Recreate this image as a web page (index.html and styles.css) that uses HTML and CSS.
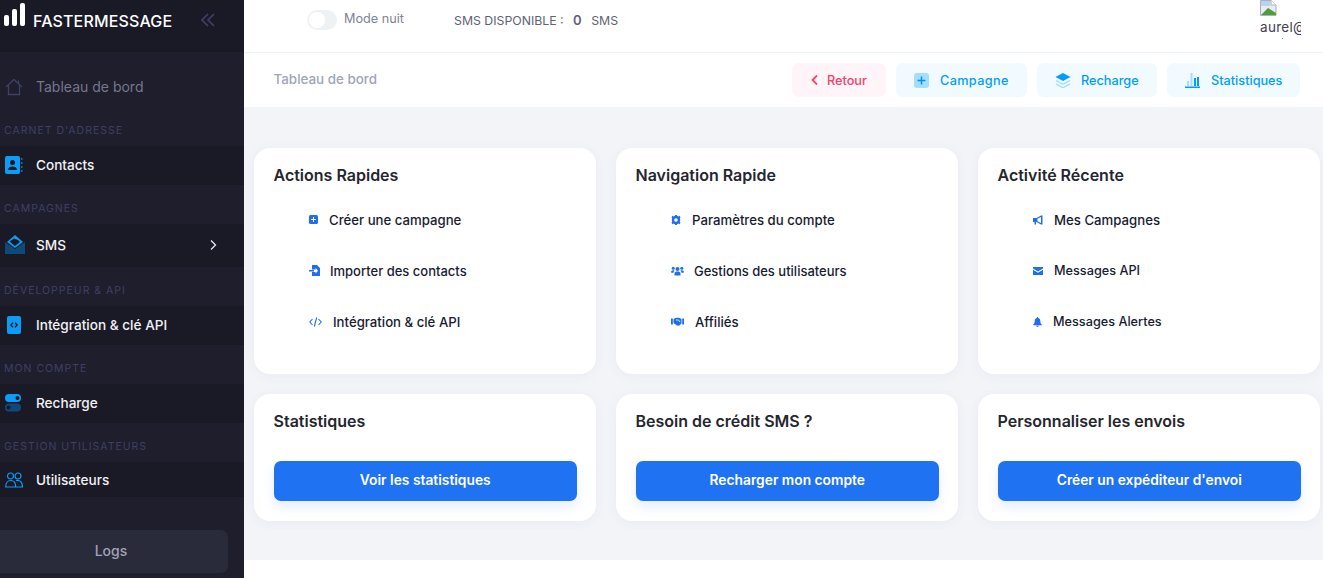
FILE: index.html
```html
<!DOCTYPE html>
<html lang="fr">

<head>
    <meta charset="utf-8">
    <title>FasterMessage - Tableau de bord</title>
    <link rel="stylesheet" href="styles.css">
</head>

<body>
    <div class="page">
        <aside class="sidebar">
            <div class="brand">
                <svg class="brand-bars" width="22" height="24" viewBox="0 0 22 24"><rect x="0" y="12" width="5" height="11" rx="2" fill="#fff"/><rect x="8" y="6" width="5" height="17" rx="2" fill="#fff"/><rect x="16" y="0" width="5" height="23" rx="2" fill="#fff"/></svg>
                <span class="brand-name">FASTERMESSAGE</span>
                <svg class="brand-toggle" width="14" height="14" viewBox="0 0 14 14" fill="none" stroke="#3f4069" stroke-width="1.6"><path d="M7 1 1 7l6 6M13 1 7 7l6 6"/></svg>
            </div>
            <nav class="menu">
                <a class="menu-item menu-item-first menu-item-muted">
                    <svg width="18" height="18" viewBox="0 0 18 18" fill="none" stroke="#3f4069" stroke-width="1.3"><path d="M1 9 9 1.500 17 9M3.500 7.500V16.500H14.500V7.500M13.500 2.500V5"/></svg>
                    <span>Tableau de bord</span>
                </a>
                <div class="menu-label">CARNET D'ADRESSE</div>
                <a class="menu-item">
                    <svg width="18" height="18" viewBox="0 0 18 18"><rect x="0" y="0" width="15" height="18" rx="2" fill="#0d9cf5"/><path d="M16 2h1.500v2H16zM16 6h1.500v2H16zM16 10h1.500v2H16zM16 14h1.500v2H16z" fill="#0b6fb0"/><circle cx="7.500" cy="6.500" r="2.500" fill="#1a1a27"/><path d="M3 14c0-2.500 2-3.500 4.500-3.500S12 11.500 12 14z" fill="#1a1a27"/></svg>
                    <span>Contacts</span>
                </a>
                <div class="menu-label">CAMPAGNES</div>
                <a class="menu-item menu-item-tall">
                    <svg width="20" height="19" viewBox="0 0 20 19"><path d="M0 7 10 14l10-7v12H0z" fill="#0e4a78"/><path d="M10 0l8 7-8 6-8-6z" fill="#0d9cf5"/><path d="M4.500 6.500 9 3.500l4 1.500 2 2-5 4z" fill="#1a1a27"/></svg>
                    <span>SMS</span>
                    <svg class="menu-arrow" width="7" height="10" viewBox="0 0 7 10" fill="none" stroke="#e8e8ee" stroke-width="1.300"><path d="M1 .5 5.500 5 1 9.500"/></svg>
                </a>
                <div class="menu-label">DÉVELOPPEUR &amp; API</div>
                <a class="menu-item">
                    <svg width="18" height="18" viewBox="0 0 18 18"><rect x="2" y="0" width="14" height="18" rx="2" fill="#0d9cf5"/><path d="M8 6.800 5.800 9 8 11.200M10 6.800 12.200 9 10 11.200" fill="none" stroke="#1a1a27" stroke-width="1.300"/></svg>
                    <span>Intégration &amp; clé API</span>
                </a>
                <div class="menu-label">MON COMPTE</div>
                <a class="menu-item">
                    <svg width="18" height="18" viewBox="0 0 18 18"><rect x="0" y="0" width="16" height="8" rx="4" fill="#0d9cf5"/><circle cx="12.500" cy="4" r="2" fill="#1a1a27"/><rect x="0" y="9.500" width="16" height="8" rx="4" fill="#0e4a78"/><circle cx="3.500" cy="13.500" r="2" fill="#1a1a27"/></svg>
                    <span>Recharge</span>
                </a>
                <div class="menu-label">GESTION UTILISATEURS</div>
                <a class="menu-item menu-item-short">
                    <svg width="18" height="16" viewBox="0 0 18 16" fill="none" stroke="#0d9cf5" stroke-width="1.200"><circle cx="5.500" cy="4" r="3"/><circle cx="13" cy="4" r="3"/><path d="M.7 15c0-4 2-6.500 5-6.500 3.300 0 5 2.500 5 6.500zM11 8.500c4 -1 6.500 2 6.500 6.500H11"/></svg>
                    <span>Utilisateurs</span>
                </a>
            </nav>
            <a class="logs">Logs</a>
        </aside>

        <div class="main">
            <header class="topbar">
                <span class="switch"><span class="switch-knob"></span></span>
                <span class="mode-label">Mode nuit</span>
                <span class="sms-count">SMS DISPONIBLE : <b>0</b> SMS</span>
                <div class="avatar">
                    <svg width="17" height="16" viewBox="0 0 17 16"><path d="M.5.500H11L16 5v10.500H.5z" fill="#e6ecf2" stroke="#a9b2ba"/><path d="M11 .5V5h5" fill="#fff" stroke="#a9b2ba"/><path d="M1 15 8 8l8 5v2z" fill="#4e9d3a"/><path d="M1 1h9v5H1z" fill="#b9d2ee"/></svg>
                    <div class="avatar-alt">aurel@</div>
                </div>
            </header>

            <div class="toolbar">
                <span class="crumb">Tableau de bord</span>
                <div class="toolbar-actions">
                    <a class="tool-btn tool-btn-red">
                        <svg width="7" height="10" viewBox="0 0 7 10" fill="none" stroke="#f1416c" stroke-width="1.800"><path d="M6 .5 1.500 5 6 9.500"/></svg>
                        Retour
                    </a>
                    <a class="tool-btn tool-btn-campagne">
                        <svg width="15" height="15" viewBox="0 0 15 15"><rect width="15" height="15" rx="3" fill="#a6dcfd"/><path d="M7.500 3.500v8M3.500 7.500h8" stroke="#0095e8" stroke-width="1.500"/></svg>
                        Campagne
                    </a>
                    <a class="tool-btn tool-btn-recharge">
                        <svg width="16" height="15" viewBox="0 0 16 15"><path d="M8 0l7.500 4L8 8 .5 4z" fill="#009ef7"/><path d="M1.500 7 8 10.500 14.500 7l1 1L8 12 .5 8zM1.500 10.500 8 14l6.500-3.500 1 1L8 15.500.5 11.500z" fill="#a6dcfd"/></svg>
                        Recharge
                    </a>
                    <a class="tool-btn tool-btn-stats">
                        <svg width="15" height="16" viewBox="0 0 15 16"><path d="M2 9h2v5H2zM5.500 1h2v13h-2z" fill="#a6dcfd"/><path d="M9 6h2v8H9zM12 5h2v9h-2zM0 14.500h15V16H0z" fill="#009ef7"/></svg>
                        Statistiques
                    </a>
                </div>
            </div>

            <div class="content">
                <div class="card-grid">
                    <section class="card">
                        <h2>Actions Rapides</h2>
                        <ul class="quick-list">
                            <li><svg width="9" height="9" viewBox="0 0 9 9"><rect width="9" height="9" rx="1.500" fill="#1f6feb"/><path d="M4.500 2.200v4.600M2.200 4.500h4.600" stroke="#fff"/></svg>Créer une campagne</li>
                            <li class="quick-tight"><svg width="11" height="11" viewBox="0 0 11 11"><path d="M3 0h5l3 3v8H3V7h3.500v1.500L9 5.700 6.500 3v1.500H3z" fill="#1f6feb"/><path d="M0 5h5v1.500H0z" fill="#1f6feb"/></svg>Importer des contacts</li>
                            <li><svg width="13" height="10" viewBox="0 0 13 10" fill="none" stroke="#1f6feb" stroke-width="1.100"><path d="M3.500 2 .8 5l2.700 3M9.500 2l2.700 3-2.700 3M7.700.5 5.300 9.500"/></svg>Intégration &amp; clé API</li>
                        </ul>
                    </section>
                    <section class="card">
                        <h2>Navigation Rapide</h2>
                        <ul class="quick-list">
                            <li><svg width="10" height="10" viewBox="0 0 10 10"><circle cx="5" cy="5" r="3" fill="none" stroke="#1f6feb" stroke-width="2.400"/><path d="M4 0h2v2H4zM4 8h2v2H4zM.4 2.200l1.200-1.400 1.500 1.300-1.200 1.400zM6.900 7.900l1.200-1.400 1.500 1.300-1.200 1.400zM.4 7.800l1.200 1.400 1.500-1.300-1.200-1.400zM6.900 2.100l1.200 1.400 1.500-1.300L8.400.8z" fill="#1f6feb"/></svg>Paramètres du compte</li>
                            <li class="quick-tight"><svg width="13" height="10" viewBox="0 0 13 10" fill="#1f6feb"><circle cx="6.500" cy="3" r="2"/><circle cx="2.200" cy="2.200" r="1.500"/><circle cx="10.800" cy="2.200" r="1.500"/><path d="M3.500 9.500V7.500C3.500 6 5 5.500 6.500 5.500S9.500 6 9.500 7.500v2zM0 6.500C0 5 1 4.300 2.200 4.300c.6 0 1 .1 1.400.4-.8.500-1.100 1.300-1.200 2.300zM13 6.500C13 5 12 4.300 10.800 4.300c-.6 0-1 .1-1.400.4.800.5 1.100 1.300 1.200 2.300z"/></svg>Gestions des utilisateurs</li>
                            <li><svg width="13" height="9" viewBox="0 0 13 9" fill="#1f6feb"><path d="M0 1.500h1.800v6H0zM11.200 1.500H13v6h-1.800z"/><path d="M2.500 2 5 .8h3L10.500 2v4.500L8 8.800 6 8.500 2.500 6z"/><path d="M5 3h2.500l1.500 2" fill="none" stroke="#fff" stroke-width=".8"/></svg>Affiliés</li>
                        </ul>
                    </section>
                    <section class="card">
                        <h2>Activité Récente</h2>
                        <ul class="quick-list">
                            <li><svg width="10" height="10" viewBox="0 0 10 10" fill="#1f6feb"><path d="M0 3h3.500L8 .5h1.500v9H8L3.500 7H3v2.500H1.500V7H0z"/><path d="M8 2 4.500 3.800v2.400L8 8z" fill="#fff"/></svg>Mes Campagnes</li>
                            <li class="quick-narrow"><svg width="10" height="8" viewBox="0 0 10 8" fill="#1f6feb"><path d="M0 0h10v1.500L5 4.500 0 1.500z"/><path d="M0 2.800 5 5.800l5-3V8H0z"/></svg>Messages API</li>
                            <li class="quick-narrow"><svg width="9" height="10" viewBox="0 0 9 10" fill="#1f6feb"><path d="M4.500 0C5 0 5.200.4 5.200.9 6.800 1.300 7.300 2.600 7.300 4c0 1.800.6 2.700 1.500 3.600v.7H.2v-.7C1.100 6.700 1.700 5.800 1.700 4c0-1.400.5-2.700 2.100-3.100C3.800.4 4 0 4.500 0zM3.200 8.800h2.600C5.700 9.500 5.200 10 4.500 10s-1.200-.5-1.300-1.200z"/></svg>Messages Alertes</li>
                        </ul>
                    </section>
                    <section class="card card-cta">
                        <h2>Statistiques</h2>
                        <a class="cta">Voir les statistiques</a>
                    </section>
                    <section class="card card-cta">
                        <h2>Besoin de crédit SMS ?</h2>
                        <a class="cta">Recharger mon compte</a>
                    </section>
                    <section class="card card-cta">
                        <h2>Personnaliser les envois</h2>
                        <a class="cta">Créer un expéditeur d'envoi</a>
                    </section>
                </div>
            </div>
        </div>
    </div>
</body>

</html>
```

FILE: styles.css
```css
* {
    box-sizing: border-box;
}

html,
body {
    margin: 0;
    height: 100%;
    overflow: hidden;
}

body {
    font-family: "Inter", "Liberation Sans", sans-serif;
    background: #fff;
    color: #181c32;
}

.page {
    display: flex;
    height: 578px;
}

/* sidebar */
.sidebar {
    width: 244px;
    flex-shrink: 0;
    background: #1e1e2d;
    overflow: hidden;
}

.brand {
    height: 52px;
    background: #1a1a27;
    display: flex;
    align-items: flex-start;
    padding: 3px 0 0 4px;
}

.brand-name {
    color: #fff;
    font-size: 16px;
    font-weight: 500;
    letter-spacing: 0.15px;
    margin: 8px 0 0 7px;
    width: 168px;
}

.brand-toggle {
    margin-top: 10px;
}

.menu-item {
    display: flex;
    align-items: center;
    height: 39px;
    padding: 0 0 2px 5px;
    gap: 13px;
    background: #1a1a27;
    color: #f2f2f5;
    font-size: 13.6px;
    font-weight: 500;
}

.menu-item svg {
    flex-shrink: 0;
}

.menu-item-first {
    margin-top: 16px;
    background: none;
}

.menu-item-muted {
    color: #77778c;
    font-size: 14px;
    font-weight: 400;
}

.menu-item-tall {
    height: 43px;
    gap: 11px;
}

.menu-item-short {
    height: 35px;
    padding-bottom: 0;
}

.menu-arrow {
    margin: 0 27px 0 auto;
}

.menu-label {
    height: 39px;
    line-height: 48px;
    padding-left: 4px;
    color: #3f4062;
    font-size: 10.5px;
    letter-spacing: 1px;
}

.logs {
    display: block;
    width: 234px;
    height: 43px;
    margin: 33px 0 0 -6px;
    border-radius: 7px;
    background: #2a2b3a;
    color: #a2a3b7;
    font-size: 14px;
    font-weight: 500;
    line-height: 41px;
    text-align: center;
}

/* top */
.main {
    flex: 1;
    min-width: 0;
}

.topbar {
    height: 53px;
    border-bottom: 1px solid #eff2f5;
    display: flex;
    align-items: flex-start;
    padding-left: 63px;
}

.switch {
    width: 30px;
    height: 20px;
    margin-top: 10px;
    padding: 2px;
    border-radius: 10px;
    background: #eff2f5;
}

.switch-knob {
    display: block;
    width: 16px;
    height: 16px;
    border-radius: 50%;
    background: #fff;
}

.mode-label {
    margin: 11px 0 0 7px;
    width: 110px;
    color: #7e8299;
    font-size: 12.7px;
}

.sms-count {
    margin-top: 12px;
    color: #5e6278;
    font-size: 12.3px;
}

.sms-count b {
    margin: 0 6px;
    font-size: 13px;
    font-weight: 600;
}

.avatar {
    width: 41px;
    height: 40px;
    margin-left: auto;
    margin-right: 22px;
    overflow: hidden;
}

.avatar svg {
    display: block;
}

.avatar::after {
    content: "";
    display: block;
    width: 1px;
    height: 1px;
    margin: 1px 0 0 22px;
    background: #8a8d9c;
}

.avatar-alt {
    color: #3f4254;
    font-size: 13.5px;
    letter-spacing: 0.3px;
    line-height: 20px;
    margin-top: 1px;
    white-space: nowrap;
}

.toolbar {
    height: 54px;
    display: flex;
    align-items: center;
    justify-content: space-between;
    padding: 0 23px 0 29.5px;
}

.crumb {
    color: #a1a5b7;
    font-size: 13.4px;
    font-weight: 500;
    padding-bottom: 2px;
}

.toolbar-actions {
    display: flex;
    gap: 10px;
}

.tool-btn {
    display: flex;
    align-items: center;
    height: 34px;
    border-radius: 7px;
    background: #f1faff;
    color: #009ef7;
    font-size: 12.7px;
    font-weight: 500;
    gap: 11px;
}

.tool-btn-red {
    width: 94px;
    background: #fff5f8;
    color: #f1416c;
    padding-left: 19px;
    gap: 9px;
}

.tool-btn-campagne {
    width: 131px;
    padding-left: 18px;
    letter-spacing: 0.35px;
}

.tool-btn-recharge {
    width: 120px;
    padding-left: 18px;
    gap: 10px;
}

.tool-btn-stats {
    width: 133px;
    padding-left: 18px;
    gap: 11px;
}

/* cards */
.content {
    height: 453px;
    background: #f3f4f8;
    padding: 41px 0 0 10px;
}

.card-grid {
    display: grid;
    grid-template-columns: repeat(3, 342px);
    grid-template-rows: 226px 127px;
    gap: 20px;
}

.card {
    background: #fff;
    border-radius: 16px;
    padding: 17px 19px 0 19.5px;
    box-shadow: 0 2px 12px rgba(70, 80, 120, 0.05);
}

.card h2 {
    margin: 0;
    font-size: 16px;
    font-weight: 600;
    line-height: 20px;
    color: #25262e;
}

.quick-list {
    list-style: none;
    margin: 9px 0 0;
    padding: 0 0 0 35.5px;
}

.quick-list li {
    display: flex;
    align-items: center;
    height: 51px;
    gap: 11px;
    font-size: 13.2px;
    font-weight: 500;
    color: #181c32;
}

.quick-list li.quick-tight {
    gap: 10px;
    font-size: 13px;
}

.quick-list li.quick-narrow {
    font-size: 12.7px;
}

.quick-list li svg {
    flex-shrink: 0;
}

.card-cta {
    padding-bottom: 20px;
    display: flex;
    flex-direction: column;
    justify-content: space-between;
}

.cta {
    display: block;
    height: 40px;
    border-radius: 7px;
    background: #1f72f2;
    color: #fff;
    font-size: 13.8px;
    font-weight: 600;
    line-height: 39px;
    text-align: center;
    box-shadow: 0 6px 12px rgba(31, 114, 242, 0.12);
}
```
